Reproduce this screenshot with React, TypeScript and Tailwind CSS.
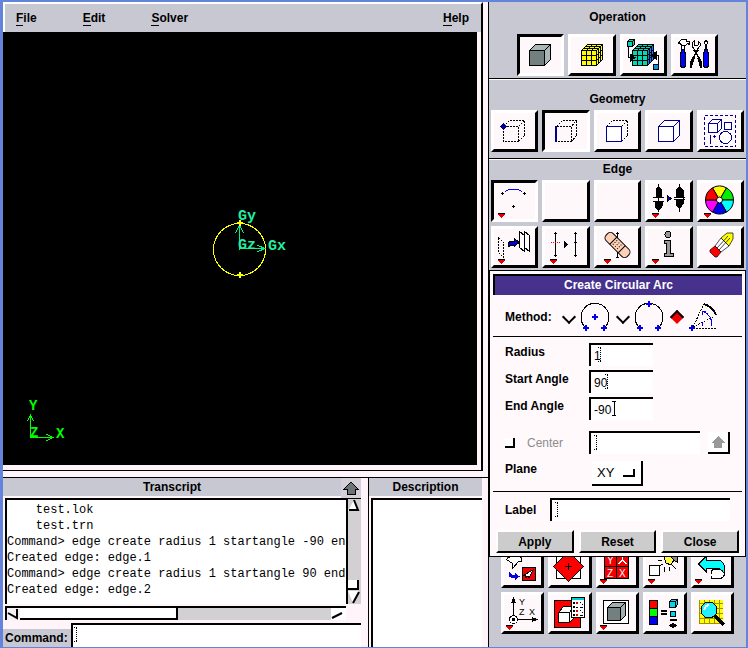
import { useState } from 'react'
import type { ReactNode } from 'react'

const FONT = "font-['Liberation_Sans',Arial,sans-serif]"
const MONO = "font-['Liberation_Mono','Courier_New',monospace]"

function Icon({ children }: { children: ReactNode }) {
  return (
    <svg
      width="41"
      height="36"
      viewBox="0 0 41 36"
      className="block shrink-0"
      fill="none"
      stroke="#000"
      strokeWidth={1}
      shapeRendering="crispEdges"
      aria-hidden="true"
    >
      {children}
    </svg>
  )
}

function Menu({ x = 4 }: { x?: number }) {
  return (
    <g>
      <path d={`M${x} 31h7l-3.5 4z`} fill="#e00000" stroke="none" />
      <path d={`M${x} 30.5h7`} />
    </g>
  )
}

function Plus({ x, y, color = '#000', s = 1.5, w = 1 }: { x: number; y: number; color?: string; s?: number; w?: number }) {
  return <path d={`M${x - s} ${y}h${s * 2}M${x} ${y - s}v${s * 2}`} stroke={color} strokeWidth={w} />
}

function ToolButton({ label, pressed, children }: { label: string; pressed?: boolean; children?: ReactNode }) {
  return (
    <button
      type="button"
      aria-label={label}
      aria-pressed={!!pressed}
      className={
        'h-[42px] min-w-0 overflow-hidden border-[3px] bg-[#fff8fa] ' +
        (pressed
          ? 'border-t-black border-l-black border-r-white border-b-white'
          : 'border-t-white border-l-white border-r-black border-b-black')
      }
    >
      {children}
    </button>
  )
}

function Heading({ children, className }: { children: ReactNode; className: string }) {
  return <h2 className={'flex items-end justify-center leading-4 ' + className}>{children}</h2>
}

function ArcPreview() {
  return (
    <svg width="120" height="80" viewBox="0 0 120 80" fill="none" shapeRendering="crispEdges" aria-label="Arc preview">
      <circle cx="59.500" cy="40.500" r="26" stroke="#ffff00" />
      <g stroke="#00f090">
        <path d="M59.500 40.500V16M55.500 24l4-8 4 8M59 39.500h26M77 36l8 3.500-8 3.500" />
      </g>
      <Plus x={60} y={14} color="#ffff00" s={3} w={2} />
      <Plus x={60} y={66} color="#ffff00" s={3} w={2} />
      <g fill="#20f0a0" className={MONO + ' text-[15px] font-bold'}>
        <text x="58" y="11">Gy</text>
        <text x="58" y="40">Gz</text>
        <text x="88" y="41">Gx</text>
      </g>
    </svg>
  )
}

function Viewport() {
  return (
    <div className="mr-[5px] flex flex-1 flex-col border-r-2 border-b border-black bg-[#fff4fa] pr-1 pb-[5px]">
      <div className="relative flex flex-1 items-center justify-center overflow-hidden bg-black">
        <ArcPreview />
        <svg
          width="44"
          height="46"
          viewBox="0 0 44 46"
          fill="none"
          stroke="#00ff00"
          shapeRendering="crispEdges"
          className="absolute bottom-[22px] left-6"
          aria-label="Axes"
        >
          <path d="M3.500 40.500V18M.5 24l3-6 3 6M3.500 40.500H26M19 37l7 3.500-7 3.500" />
          <g fill="#00ff00" stroke="none" className={MONO + ' text-[14px] font-bold'}>
            <text x="2" y="13">Y</text>
            <text x="3" y="40">Z</text>
            <text x="29" y="41">X</text>
          </g>
        </svg>
      </div>
    </div>
  )
}

const menus = ['File', 'Edit', 'Solver']

function MenuItem({ name }: { name: string }) {
  return (
    <button type="button">
      <span className="border-b border-black">{name[0]}</span>
      {name.slice(1)}
    </button>
  )
}

const lines = [
  '    test.lok',
  '    test.trn',
  'Command> edge create radius 1 startangle -90 en',
  'Created edge: edge.1',
  'Command> edge create radius 1 startangle 90 end',
  'Created edge: edge.2',
]

function UpArrow({ color }: { color: string }) {
  return (
    <svg width="16" height="14" viewBox="0 0 16 14" shapeRendering="crispEdges" aria-hidden="true">
      <path d="M8 1l7 7h-3v5H4V8H1z" fill={color} stroke={color === '#999' ? 'none' : '#000'} />
    </svg>
  )
}

function Transcript() {
  return (
    <section className="flex min-w-0 flex-1 flex-col">
      <div className="flex h-5">
        <h2 className="flex-1 border-b-2 border-[#fff4fa] bg-[#c8c8d2] text-center leading-[19px]">Transcript</h2>
        <button type="button" aria-label="Expand transcript" className="mr-[7px] flex w-5 items-center justify-center bg-[#d4d0da]">
          <UpArrow color="#6c7474" />
        </button>
      </div>
      <div className="mr-[7px] ml-[2px] flex flex-1">
        <div className="flex min-w-0 flex-1 flex-col">
          <pre className={MONO + ' flex-1 border-t-2 border-l-2 border-black bg-white pt-[2px] text-[12px] leading-4 font-normal'}>
            {lines.join('\n')}
          </pre>
          <div className="mt-[2px] mb-[3px] flex h-[14px] border-t-2 border-l-2 border-black bg-[#d2d0d2]">
            <svg width="13" height="12" viewBox="0 0 13 12" fill="none" stroke="#000" aria-hidden="true">
              <path d="M0 0h13v12H0z" fill="#f4f0f4" stroke="none" />
              <path d="M1 5l9 5V1" strokeWidth="2" />
            </svg>
            <div className="w-[158px] border-r-2 border-b-2 border-black bg-white" />
            <div className="flex-1" />
            <svg width="18" height="12" viewBox="0 0 18 12" fill="none" stroke="#000" aria-hidden="true">
              <path d="M3 0h15v12H3z" fill="#fff" stroke="none" />
              <path d="M4 10l10-5" strokeWidth="2" />
            </svg>
          </div>
        </div>
        <div className="mb-[19px] flex w-[15px] flex-col border-t border-l-2 border-black bg-[#d2d0d2]">
          <svg width="12" height="13" viewBox="0 0 12 13" fill="none" aria-hidden="true">
            <path d="M0 12L6 1l5 11z" fill="#fff" />
            <path d="M6 1l4 10H1" stroke="#000" strokeWidth="2" />
          </svg>
          <div className="flex-1" />
          <div className="mr-[2px] h-[10px] border-r-2 border-b-2 border-black bg-white" />
          <svg width="12" height="14" viewBox="0 0 12 14" fill="none" aria-hidden="true">
            <path d="M0 1h11L5 13z" fill="#fff" />
            <path d="M11 2L5 13" stroke="#000" strokeWidth="2" />
          </svg>
        </div>
      </div>
      <div className="mr-[7px] flex h-6">
        <label htmlFor="command" className="mt-[6px] w-[68px] bg-[#c8c8d2] pl-[2px] leading-[18px]">
          Command:
        </label>
        <TextBox id="command" value="" className="flex-1" caret="left-[2px]" />
      </div>
    </section>
  )
}

function TextBox({ id, value, className, caret, solid }: { id: string; value: string; className: string; caret: string; solid?: boolean }) {
  const [text, setText] = useState(value)
  return (
    <div className={'relative min-w-0 ' + className}>
      <input
        id={id}
        value={text}
        onChange={(e) => setText(e.target.value)}
        className="block h-full w-full border-t-2 border-l-2 border-black bg-white pl-[3px] text-[12px] font-normal outline-none"
      />
      <svg
        width="6"
        height="15"
        viewBox="0 0 6 15"
        fill="none"
        stroke="#000"
        strokeDasharray={solid ? undefined : '1 1'}
        shapeRendering="crispEdges"
        className={'pointer-events-none absolute top-1 ' + caret}
        aria-hidden="true"
      >
        <path d="M1 .5h4M3.500 1v13M1 14.500h4" />
      </svg>
    </div>
  )
}

function OperationIcons() {
  return (
    <div className="grid grid-cols-4 gap-1 px-7 pb-[2px]">
      <ToolButton label="Geometry" pressed>
        <Icon>
          <path d="M9.500 13.500l6-6h15l-6 6z" fill="#a8b8b8" />
          <path d="M24.500 13.500l6-6v15l-6 6z" fill="#a8b8b8" />
          <path d="M9.500 13.500h15v15h-15z" fill="#748080" />
        </Icon>
      </ToolButton>
      <ToolButton label="Mesh">
        <Icon>
          <path d="M10.500 13.500l6-6h15l-6 6zM25.500 13.500l6-6v15l-6 6zM10.500 13.500h15v15h-15z" fill="#ffff00" />
          <path d="M15.500 28.500v-15l6-6M20.500 28.500v-15l6-6M10.500 18.500h15l6-6M10.500 23.500h15l6-6M12.500 11.500h15v15M14.500 9.500h15v15" />
        </Icon>
      </ToolButton>
      <ToolButton label="Zones">
        <Icon>
          <path d="M9.500 13.500l6-6h15l-6 6zM9.500 13.500h15v15h-15z" fill="#00d8b8" />
          <path d="M24.500 13.500l6-6v15l-6 6z" fill="#0080ff" />
          <path d="M14.500 28.500v-15l6-6M19.500 28.500v-15l6-6M9.500 18.500h15l6-6M9.500 23.500h15l6-6M11.500 11.500h15v15M13.500 9.500h15v15" />
          <path d="M4.500 4.500l2-2h5v5l-2 2h-5zM4.500 4.500h5v5M9.500 4.500l2-2" fill="#00d8b8" />
          <path d="M5.500 10v10.500h3M35.500 27V18.500h-4" />
          <path d="M7 17l5 3.500-5 4zM33 15l-5 3.500 5 3.500z" fill="#000" />
          <path d="M30.500 27.500h5v5h-5z" fill="#0090f0" />
        </Icon>
      </ToolButton>
      <ToolButton label="Tools">
        <Icon>
          <path d="M7.500 7v6h3V7" fill="#fff" />
          <path d="M4.500 6.500l1-2 2-2h5v2h3v3l-2-1-2 2h-4l-1-2z" fill="#fff" />
          <path d="M7 12h4v3h1v14l-1 2H7l-1-2V15h1z" fill="#000" stroke="none" />
          <path d="M8 13h2v3h1v12l-1 2H8l-1-2V16h1z" fill="#0000ff" stroke="none" />
          <path d="M20 4l-2 2v3l3 4 1 2 1-2 3-4V6l-2-2v4l-2 1-2-1z" fill="#fff" />
          <path d="M20 13l5 8M24 13l-5 8" strokeWidth="1.500" />
          <path d="M19 19l-3 6v6h2l1-5 2-5zM25 19l3 6v6h-2l-1-5-2-5z" fill="#000" stroke="none" />
          <path d="M31.500 12V8l-1-2 1-3h1l1 3-1 2v4" fill="#fff" />
          <path d="M30 12h4v3h1v14l-1 2h-4l-1-2V15h1z" fill="#000" stroke="none" />
          <path d="M31 13h2v3h1v12l-1 2h-2l-1-2V16h1z" fill="#0000ff" stroke="none" />
        </Icon>
      </ToolButton>
    </div>
  )
}

function GeometryIcons() {
  return (
    <div className="grid grid-cols-5 gap-1 px-[2px] pb-[6px]">
      <ToolButton label="Vertex">
        <Icon>
          <path d="M9.500 13.500h15v15h-15zM9.500 13.500l6-6h15l-6 6M30.500 7.500v15l-6 6" strokeDasharray="2 1" />
          <path d="M9.500 11l2.500 2.500-2.500 2.500L7 13.500z" fill="#000090" stroke="#000090" />
        </Icon>
      </ToolButton>
      <ToolButton label="Edge" pressed>
        <Icon>
          <path d="M11.500 13.500h15v15h-15zM11.500 13.500l6-6h14l-5 6M31.500 7.500v15l-5 6" strokeDasharray="2 1" />
          <path d="M11 13v16" stroke="#000090" strokeWidth="2" />
        </Icon>
      </ToolButton>
      <ToolButton label="Face">
        <Icon>
          <path d="M9.500 13.500l6-6h15l-6 6M30.500 7.500v15l-6 6" strokeDasharray="2 1" />
          <path d="M9.500 13.500h15v15h-15z" fill="#fff" stroke="#000090" />
        </Icon>
      </ToolButton>
      <ToolButton label="Volume">
        <Icon>
          <path d="M10.500 13.500h15v15h-15zM10.500 13.500l6-6h15l-6 6M31.500 7.500v15l-6 6" fill="#fff" stroke="#000090" />
        </Icon>
      </ToolButton>
      <ToolButton label="Group">
        <Icon>
          <g stroke="#000090">
            <path d="M4.500 2.500h31v31h-31z" strokeDasharray="3 2" />
            <path d="M8.500 10.500h9v9h-9zM8.500 10.500l4-4h9l-4 4M21.500 6.500v9l-4 4" fill="#fff" />
            <path d="M24.500 9.500h7v7h-7z" fill="#fff" />
            <path d="M10.500 22v9" />
            <circle cx="25.500" cy="24.500" r="6" fill="#fff" />
          </g>
          <Plus x={14.5} y={23.5} color="#000090" />
        </Icon>
      </ToolButton>
    </div>
  )
}

function EdgeIcons() {
  return (
    <div className="grid grid-cols-5 gap-1 px-[2px] pb-[2px]">
      <ToolButton label="Create edge" pressed>
        <Icon>
          <path d="M11 8.500l4-2h9l4 2" stroke="#0000ff" />
          <Plus x={8.5} y={10.5} />
          <Plus x={30.5} y={10.5} />
          <Plus x={19.5} y={23.5} />
          <Menu />
        </Icon>
      </ToolButton>
      <ToolButton label="Unused 1" />
      <ToolButton label="Unused 2" />
      <ToolButton label="Connect edges">
        <Icon>
          <path d="M10.500 1v28M31.500 1v28M5 14.500h11M5 18.500h11M26 14.500h11M26 16.500h11" />
          <path d="M8 6l2-2h1l2 2v8H8zM7 19h7v4l-2 3h-3l-2-3zM28 7l3-3h1l3 3v14l-3 4h-1l-3-4z" fill="#000" />
          <path d="M28 15.500h7" stroke="#fff" />
          <path d="M19 12l4 3.500-4 3.500z" fill="#0000f0" />
          <Menu />
        </Icon>
      </ToolButton>
      <ToolButton label="Edge color">
        <Icon>
          <g transform="translate(19.500 17)" shapeRendering="auto">
            <path d="M0 0L-7-12.100A14 14 0 0 1 7-12.100z" fill="#ffff00" />
            <path d="M0 0L7-12.100A14 14 0 0 1 14 0z" fill="#00f000" />
            <path d="M0 0H14A14 14 0 0 1 7 12.100z" fill="#00ffff" />
            <path d="M0 0L7 12.100A14 14 0 0 1-7 12.100z" fill="#0000f0" />
            <path d="M0 0L-7 12.100A14 14 0 0 1-14 0z" fill="#ff00ff" />
            <path d="M0 0H-14A14 14 0 0 1-7-12.100z" fill="#ff0000" />
            <circle r="3" fill="#fff" />
          </g>
          <Menu />
        </Icon>
      </ToolButton>

      <ToolButton label="Move or copy edge">
        <Icon>
          <path d="M4.500 8.500l5 5v15l-5-5z" strokeDasharray="2 1" />
          <path d="M14 17v-3l3-2h3V9l5 4.500-5 4.500v-2h-3l-3 2z" fill="#0000d0" />
          <path d="M25.500 2.500l5 4v16l-5-4zM30.500 2.500l5 4v16l-5-4z" fill="#fff" />
          <Menu />
        </Icon>
      </ToolButton>
      <ToolButton label="Split edge">
        <Icon>
          <path d="M10.500 4v23M30.500 4v23" />
          <path d="M6 13.500h10" stroke="#f00000" strokeDasharray="1 1" />
          <path d="M19 12l3 3.500-3 3.500z" fill="#0000f0" />
          <Plus x={10.5} y={4.5} />
          <Plus x={10.5} y={26.5} />
          <Plus x={30.5} y={4.5} />
          <Plus x={30.5} y={13.5} />
          <Plus x={30.5} y={26.5} />
          <Menu x={5} />
        </Icon>
      </ToolButton>
      <ToolButton label="Heal edge">
        <Icon>
          <path d="M20.500 3v26M19 4.500h3M19 28.500h3" />
          <g transform="translate(20.500 16) rotate(45)" shapeRendering="auto">
            <rect x="-15" y="-5" width="30" height="10" rx="4" fill="#ffd0b8" />
            <path d="M-6-5v10M6-5v10" />
            <path d="M-4-2.500h9M-4 0h9M-4 2.500h9" strokeDasharray="1 2" />
          </g>
          <Menu x={7} />
        </Icon>
      </ToolButton>
      <ToolButton label="Edge information">
        <Icon>
          <circle cx="20" cy="5.500" r="3" fill="#989898" />
          <path d="M16.500 11.500h6v13h3v3h-9v-3h2v-10h-2z" fill="#989898" />
          <Menu />
        </Icon>
      </ToolButton>
      <ToolButton label="Delete edge">
        <Icon>
          <g shapeRendering="auto" strokeWidth=".7">
            <path d="M15 17l6-8 8 8-8 6z" fill="#fff" />
            <path d="M21 9l6-5h6v6l-4 7z" fill="#ffff00" />
            <path d="M17 19l11-12M19 21l11-12" />
            <path d="M10 21l5-4 6 6-4 5h-2l-5-5z" fill="#ff0000" />
          </g>
        </Icon>
      </ToolButton>
    </div>
  )
}

function GlobalIcons() {
  return (
    <div className="-mt-[11px] grid grid-cols-5 gap-1 px-3">
      <ToolButton label="Fit to window">
        <Icon>
          <path d="M3 4h15v7H3z" fill="#f00000" stroke="none" />
          <path d="M2.500 10.500l8-7 7 6v3h-3l-6 7v-5z" fill="#fff" />
          <path d="M4.500 22v5l3 2h3v3l5-4.500-5-4v2.500h-2z" fill="#0000e0" stroke="none" />
          <path d="M18.500 18.500h13v13h-13z" fill="#f00000" />
          <path d="M20 26l9-5-4 8-1-2-3 2v-3z" fill="#fff" />
        </Icon>
      </ToolButton>
      <ToolButton label="Pivot">
        <Icon>
          <path d="M5.500 4.500h24v25h-24z" fill="#fff" />
          <path d="M17.500 2.500l15 15-15 15-15-15z" fill="#ff0000" />
          <Plus x={17.5} y={17.5} s={3.5} />
        </Icon>
      </ToolButton>
      <ToolButton label="Quadrants">
        <Icon>
          <path d="M5.500 4.500h24v25h-24z" fill="#f00000" />
          <path d="M17.500 4v26M5 17.500h24" />
          <path d="M23.500 6v5l-4 4M23.500 11l4 4" stroke="#fff" />
          <g fill="#fff" stroke="none" className="text-[10px] font-normal">
            <text x="8" y="15">Y</text>
            <text x="8" y="28">Z</text>
            <text x="20" y="28">X</text>
          </g>
          <Menu x={1} />
        </Icon>
      </ToolButton>
      <ToolButton label="Light">
        <Icon>
          <path d="M3.500 16.500h10v10h-10z" fill="#fff" strokeWidth="1.500" />
          <path d="M25 3h6v10l-5-3z" fill="#8c8c8c" />
          <path d="M18 8l4-3 6 6-3 5-5-2z" fill="#ffff40" />
          <path d="M12 11l4 1M13 17l4-2M18 23l1-5M24 22l-1-4M30 20l-4-4" />
          <Menu x={2} />
        </Icon>
      </ToolButton>
      <ToolButton label="Undo">
        <Icon>
          <path d="M19 20.500h10c3 2 2 8-3 9h-8c-2-2-1-8 1-9z" fill="#fff" />
          <path d="M4.500 15l8-8v4h9c7 0 9 3 9 9v5c-2-4-4-6-9-6h-9v4z" fill="#00ffff" />
          <Menu x={1} />
        </Icon>
      </ToolButton>

      <ToolButton label="Orient model">
        <Icon>
          <path d="M9.500 21V5M13 24.500h17" />
          <path d="M7 8l2.500-6L12 8zM28 22l6 2.500-6 2.500z" fill="#000" stroke="none" />
          <circle cx="9.500" cy="24.500" r="4" fill="#fff" />
          <path d="M8 24.500h3" strokeWidth="3" />
          <g fill="#000" stroke="none" className="text-[9px] font-normal">
            <text x="15" y="10">Y</text>
            <text x="15" y="20">Z</text>
            <text x="25" y="20">X</text>
          </g>
          <Menu x={2} />
        </Icon>
      </ToolButton>
      <ToolButton label="Display attributes">
        <Icon>
          <path d="M3.500 5.500h26v27h-26z" fill="#ff0000" />
          <path d="M7.500 17.500l5-6h11v11l-5 5h-11zM7.500 17.500h11v10M18.500 17.500l5-6" fill="#fff" />
          <path d="M20.500 2.500h13v20h-13z" fill="#fff" />
          <path d="M21 4h12" stroke="#00d0d0" strokeWidth="2" />
          <path d="M22 8h2M22 12h2M22 16h2M22 20h2" strokeWidth="2" />
          <path d="M25 8h2M25 16h2M25 20h2" stroke="#d00000" strokeWidth="2" />
          <path d="M29 7h1M31 9h1M29 12h3M29 15h1M31 17h1M29 20h3M25 12h2" />
        </Icon>
      </ToolButton>
      <ToolButton label="Render model">
        <Icon>
          <path d="M4.500 5.500h25v23h-25z" fill="#fff" />
          <path d="M8.500 12.500l5-5h13l-5 5zM21.500 12.500l5-5v13l-5 5z" fill="#a0b0b0" />
          <path d="M8.500 12.500h13v13h-13z" fill="#748080" />
          <Menu x={1} />
        </Icon>
      </ToolButton>
      <ToolButton label="Color mode">
        <Icon>
          <path d="M3.500 5.500h8v8h-8z" fill="#ff0000" />
          <path d="M3.500 13.500h8v8h-8z" fill="#00ff00" />
          <path d="M3.500 21.500h8v8h-8z" fill="#0000f0" />
          <path d="M15 16h6M15 19h6M24 25h7" strokeWidth="2" />
          <path d="M23.500 6.500l2-2h6v5l-2 3h-6zM23.500 6.500h6v6M29.500 6.500l2-2M24.500 16.500h5v5h-5z" fill="#00d8f0" />
          <path d="M27 28l3 2.500-3 2.500-3-2.500z" fill="#000" />
        </Icon>
      </ToolButton>
      <ToolButton label="Zoom">
        <Icon>
          <path d="M5 5h24v24H5z" fill="#ffff00" stroke="none" />
          <path
            d="M5.500 5v24M10.500 5v24M15.500 5v24M20.500 5v24M25.500 5v24M5 8.500h24M5 13.500h24M5 18.500h24M5 23.500h24M5 28.500h24"
            stroke="#a09000"
          />
          <path d="M21 21l9 9" strokeWidth="4" />
          <circle cx="15" cy="15" r="8" fill="#20f0ff" />
          <path d="M10 15l2-4 3-1" stroke="#fff" strokeWidth="2" />
        </Icon>
      </ToolButton>
    </div>
  )
}

const fields = [
  { id: 'radius', label: 'Radius', value: '1', caret: 'left-[8px]' },
  { id: 'start', label: 'Start Angle', value: '90', caret: 'left-[15px]' },
  { id: 'end', label: 'End Angle', value: '-90', caret: 'left-[22px]', solid: true },
]

const methods = [
  {
    name: 'Center and two ends',
    icon: (
      <>
        <path d="M6 27A14 14 0 1 1 24 27" />
        <Plus x={15} y={16} color="#0000f0" s={3} w={2} />
        <Plus x={6} y={27} color="#0000f0" s={3} w={2} />
        <Plus x={24} y={27} color="#0000f0" s={3} w={2} />
      </>
    ),
  },
  {
    name: 'Three points',
    icon: (
      <>
        <path d="M6 27A14 14 0 1 1 24 27" />
        <Plus x={15} y={3} color="#0000f0" s={3} w={2} />
        <Plus x={6} y={27} color="#0000f0" s={3} w={2} />
        <Plus x={24} y={27} color="#0000f0" s={3} w={2} />
      </>
    ),
  },
  {
    name: 'Radius and angles',
    icon: (
      <>
        <path d="M5 26L16 3M5 26l22-11M5 27.500h24" strokeDasharray="2 1" />
        <path d="M16 3c5 1 10 6 12 11" strokeWidth="2" />
        <path d="M24 25c1-6-3-12-9-15M14 14v-4h4M15 25c0-2 0-3-1-4" stroke="#0000f0" />
        <Plus x={4} y={27} color="#0000f0" s={3} w={2} />
      </>
    ),
  },
]

function ArcDialog() {
  const [method, setMethod] = useState(2)
  return (
    <form
      aria-label="Create Circular Arc"
      className="relative z-10 border border-black bg-[#fff9fb] pb-[3px]"
      onSubmit={(e) => e.preventDefault()}
    >
      <h2 className="mx-[3px] mt-[3px] h-[21px] border-t-2 border-l-2 border-black bg-[#46328c] text-center leading-[19px] text-white">
        Create Circular Arc
      </h2>

      <fieldset className="mx-[3px] flex h-[42px] items-center border-b border-black pt-[2px] pl-3">
        <span className="w-[59px]">Method:</span>
        {methods.map((m, i) => (
          <label key={m.name} className="flex items-center">
            <input
              type="radio"
              name="method"
              aria-label={m.name}
              checked={method === i}
              onChange={() => setMethod(i)}
              className="size-[10px] rotate-45 appearance-none border-r-2 border-b-2 border-black checked:border-t-2 checked:border-r-0 checked:border-b-0 checked:border-l-2 checked:bg-[#f00000]"
            />
            <svg
              width="30"
              height="32"
              viewBox="0 0 30 32"
              fill="none"
              stroke="#000"
              shapeRendering="crispEdges"
              className="mr-2 ml-[6px]"
              aria-hidden="true"
            >
              {m.icon}
            </svg>
          </label>
        ))}
      </fieldset>

      <div className="flex flex-col gap-1 pt-[6px] pr-[15px] pl-[15px]">
        {fields.map((f) => (
          <div key={f.id} className="flex h-[23px] items-start">
            <label htmlFor={f.id} className="w-[84px] leading-[18px]">
              {f.label}
            </label>
            <TextBox id={f.id} value={f.value} caret={f.caret} solid={f.solid} className="h-[23px] w-16" />
          </div>
        ))}
        <div className="mt-[7px] flex h-[23px] items-center">
          <input
            id="use-center"
            type="checkbox"
            className="size-[10px] appearance-none border-r-2 border-b-2 border-black bg-white checked:bg-[#f00000]"
          />
          <label htmlFor="use-center" className="w-[74px] pl-3 font-normal text-[#8c8c8c]">
            Center
          </label>
          <TextBox id="center" value="" caret="left-1" className="mr-2 h-[23px] flex-1" />
          <button
            type="button"
            aria-label="Pick center"
            className="flex h-[22px] w-[22px] items-center justify-center border-r-2 border-b-2 border-black bg-white"
          >
            <UpArrow color="#999" />
          </button>
        </div>
        <div className="mt-[3px] flex items-start">
          <label htmlFor="plane" className="w-[87px] leading-4">
            Plane
          </label>
          <div className="relative">
            <select
              id="plane"
              defaultValue="XY"
              className="h-[25px] w-[51px] appearance-none border-r-2 border-b-2 border-black bg-white pl-[5px] text-[13px] font-normal"
            >
              <option>XY</option>
              <option>YZ</option>
              <option>ZX</option>
            </select>
            <span className="pointer-events-none absolute top-2 right-2 h-2 w-3 border-r-2 border-b-2 border-black" />
          </div>
        </div>
      </div>

      <div className="mx-[3px] mt-[5px] flex items-center border-t border-black px-3 pt-[6px]">
        <label htmlFor="label" className="w-[45px]">
          Label
        </label>
        <TextBox id="label" value="" caret="left-1" className="h-[23px] flex-1" />
      </div>

      <div className="mt-[9px] grid grid-cols-3 gap-[5px] px-[6px]">
        {['Apply', 'Reset', 'Close'].map((name) => (
          <button
            key={name}
            type={name === 'Apply' ? 'submit' : 'button'}
            className="flex h-[23px] items-center justify-center border-2 border-t-white border-r-black border-b-black border-l-white bg-[#cccccc] font-bold"
          >
            {name}
          </button>
        ))}
      </div>
    </form>
  )
}

export default function App() {
  return (
    <div className={FONT + ' flex min-h-screen bg-[#6484dc] pt-[2px] pr-[2px] pb-px pl-[3px] text-[12px] leading-4 font-bold text-black'}>
      <main className="flex min-w-0 flex-1 flex-col bg-[#fff4fa]">
        <nav className="mr-[5px] flex h-[30px] items-center gap-[46px] border-t-2 border-r-2 border-l-2 border-t-white border-r-black border-l-white bg-[#c8c8d2] pr-3 pl-[11px]">
          {menus.map((m) => (
            <MenuItem key={m} name={m} />
          ))}
          <div className="flex-1" />
          <MenuItem name="Help" />
        </nav>
        <Viewport />
        <div className="mt-[6px] flex h-[170px] border-t border-black">
          <Transcript />
          <section className="flex w-[120px] flex-col border-l border-black pr-[6px]">
            <h2 className="h-5 border-b-2 border-[#fff4fa] bg-[#c8c8d2] text-center leading-[19px]">Description</h2>
            <div className="ml-[2px] flex-1 border-t-2 border-l-2 border-black bg-white" />
          </section>
        </div>
      </main>

      <aside className="w-[258px] shrink-0 border-l border-black bg-[#c8c8d2]">
        <section className="border-b border-black">
          <Heading className="h-8 pb-[9px]">Operation</Heading>
          <OperationIcons />
        </section>
        <section className="border-t border-b border-t-white border-b-black">
          <Heading className="h-[30px] pb-[3px]">Geometry</Heading>
          <GeometryIcons />
        </section>
        <section className="border-t border-white">
          <Heading className="h-5 pb-[3px]">Edge</Heading>
          <EdgeIcons />
        </section>
        <ArcDialog />
        <GlobalIcons />
      </aside>
    </div>
  )
}
